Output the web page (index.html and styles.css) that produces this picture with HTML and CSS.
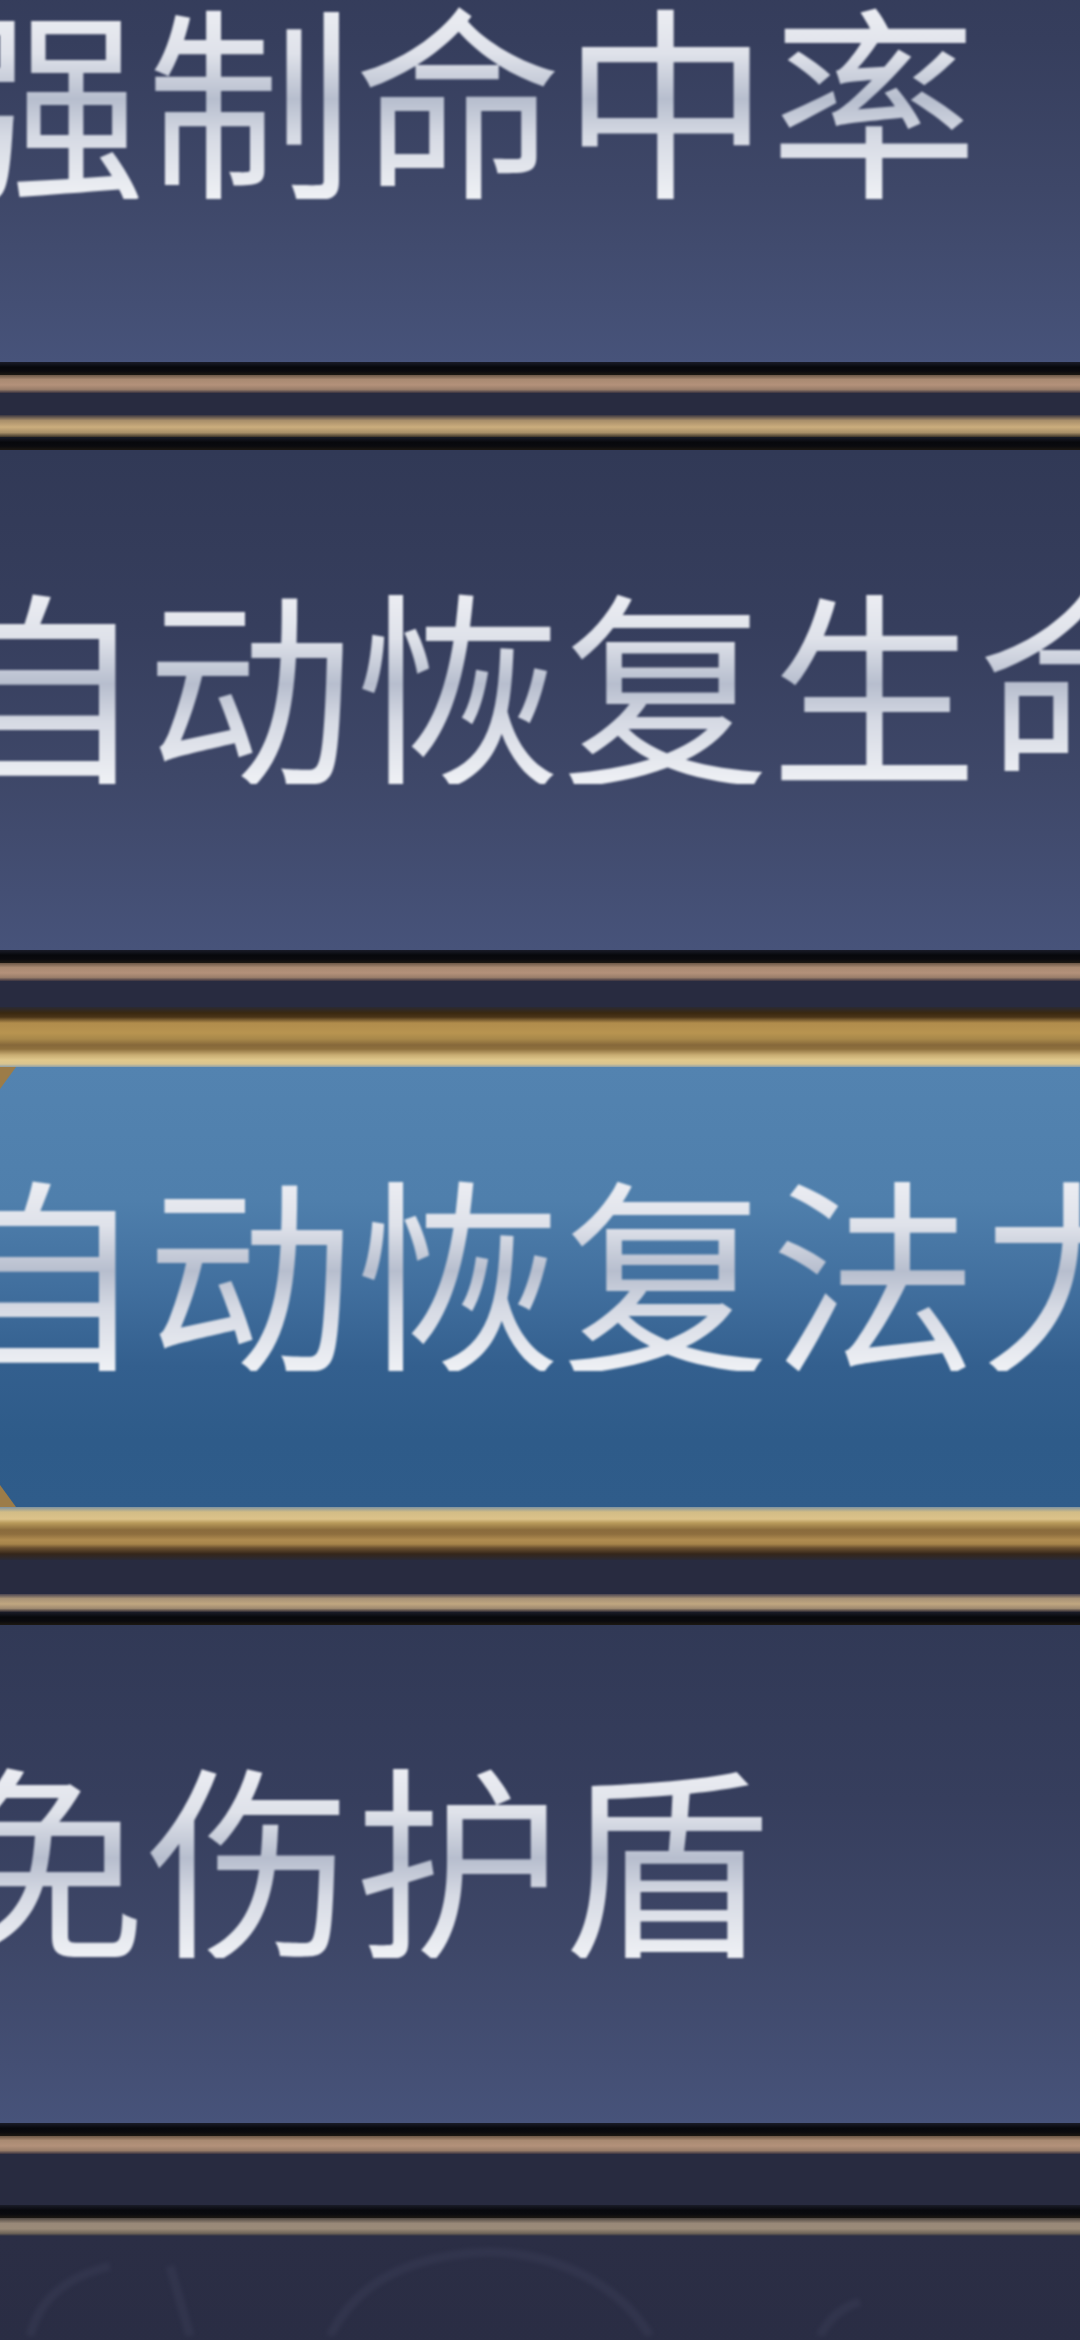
FILE: index.html
```html
<!DOCTYPE html>
<html lang="zh-CN">
<head>
<meta charset="utf-8">
<title>技能列表</title>
<link rel="stylesheet" href="styles.css">
</head>
<body>
<div class="list">
  <div class="row row-first">
    <div class="panel panel-first"><span class="label">强制命中率</span></div>
    <div class="ln-black"></div>
    <div class="ln-tan"></div>
  </div>

  <div class="gap gap-1"></div>

  <div class="row">
    <div class="ln-gold"></div>
    <div class="ln-black"></div>
    <div class="panel"><span class="label">自动恢复生命</span></div>
    <div class="ln-black"></div>
    <div class="ln-tan"></div>
  </div>

  <div class="gap gap-2"></div>

  <div class="row row-selected">
    <div class="sel-top"></div>
    <div class="sel-panel">
      <span class="corner corner-top"></span>
      <span class="label">自动恢复法力</span>
      <span class="corner corner-bottom"></span>
    </div>
    <div class="sel-bottom"></div>
  </div>

  <div class="gap gap-3"></div>

  <div class="row">
    <div class="ln-tan ln-tan-light"></div>
    <div class="ln-black"></div>
    <div class="panel panel-4"><span class="label">免伤护盾</span></div>
    <div class="ln-black"></div>
    <div class="ln-tan"></div>
  </div>

  <div class="gap gap-4"></div>

  <div class="row row-last">
    <div class="ln-black"></div>
    <div class="ln-tan ln-tan-dim"></div>
    <div class="panel-dim">
      <svg class="ornament" viewBox="0 0 1080 100" width="1080" height="100" aria-hidden="true">
        <g fill="none" stroke="#34374f" stroke-width="9">
          <path d="M330 100 C 360 40, 420 18, 490 16 C 560 18, 620 50, 650 100"/>
          <path d="M30 100 C 40 60, 70 40, 110 30"/>
          <path d="M170 30 L 190 100"/>
          <path d="M820 100 C 830 80, 845 70, 860 66"/>
        </g>
      </svg>
    </div>
  </div>
</div>
</body>
</html>
```

FILE: styles.css
```css
html, body {
  margin: 0;
  padding: 0;
  width: 1080px;
  height: 2340px;
  overflow: hidden;
  background: #282b40;
}

.list {
  display: flex;
  flex-direction: column;
  width: 1080px;
}

.row {
  display: flex;
  flex-direction: column;
  position: relative;
}

.row-first {
  margin-top: -133px;
}

.panel {
  height: 500px;
  display: flex;
  align-items: center;
  padding-bottom: 40px;
  box-sizing: border-box;
  overflow: hidden;
  background: linear-gradient(to bottom, #313956 0%, #363e5d 35%, #3e4768 65%, #47537a 100%);
}

.panel-first {
  height: 495px;
}

.panel-4 {
  height: 498px;
}

.label {
  display: block;
  margin-left: -62px;
  white-space: nowrap;
  font-family: "Noto Sans CJK SC", "Noto Sans", sans-serif;
  font-size: 208px;
  line-height: 1;
  font-weight: 400;
  color: #dfe2ea;
  background: linear-gradient(to bottom, #f1f2f6 0%, #dfe2ea 30%, #b7bece 52%, #d6dae4 70%, #eff1f5 100%);
  -webkit-background-clip: text;
  background-clip: text;
  -webkit-text-fill-color: transparent;
  filter: blur(1.2px);
}

.ln-black {
  height: 13px;
  background: linear-gradient(to bottom, #1a1c28 0%, #07080c 40%, #0a0a0e 70%, #1c1812 100%);
}

.ln-tan {
  height: 18px;
  background: linear-gradient(to bottom, #6a5646 0%, #a98a72 25%, #b3917a 55%, #9a7e6a 80%, #3a3340 100%);
}

.ln-tan-light {
  background: linear-gradient(to bottom, #4a4450 0%, #a89276 25%, #c0a680 55%, #a08a70 80%, #2a2630 100%);
}

.ln-tan-dim {
  background: linear-gradient(to bottom, #4e4640 0%, #988878 30%, #9a8a78 60%, #6e6458 85%, #2c2e42 100%);
}

.ln-gold {
  height: 22px;
  background: linear-gradient(to bottom, #3a3640 0%, #a88e6a 25%, #cbad7d 55%, #a88f68 80%, #3c3428 100%);
}

.gap {
  background: #282b40;
}
.gap-1 { height: 22px; }
.gap-2 { height: 26px; }
.gap-3 { height: 34px; }
.gap-4 { height: 51px; }

/* selected row */
.sel-top {
  height: 60px;
  background: linear-gradient(to bottom,
    #2a2a34 0px,
    #3a2810 6px,
    #4a3418 10px,
    #b08c4c 16px,
    #b89450 26px,
    #a8884a 32px,
    #86683a 38px,
    #8e703e 42px,
    #c8ac72 48px,
    #e0c88c 53px,
    #d8c490 57px,
    #8ea0a8 60px);
}

.sel-panel {
  position: relative;
  height: 440px;
  display: flex;
  align-items: center;
  padding-bottom: 40px;
  box-sizing: border-box;
  overflow: hidden;
  background: linear-gradient(to bottom, #5383b0 0%, #4f7fac 30%, #416f9e 50%, #335f8e 68%, #2e5b89 85%, #2f5c8a 100%);
}

.sel-bottom {
  height: 53px;
  background: linear-gradient(to bottom,
    #7f93a0 0px,
    #d2bc86 5px,
    #dcc28a 12px,
    #b89a5a 16px,
    #8a6b3c 23px,
    #8e6e3e 27px,
    #b08c50 33px,
    #a6844a 37px,
    #6a5030 41px,
    #35261a 47px,
    #2a2a36 53px);
}

.corner {
  position: absolute;
  left: 0;
  width: 16px;
  height: 22px;
  background: #9c7c48;
}
.corner-top {
  top: 0;
  clip-path: polygon(0 0, 100% 0, 0 100%);
}
.corner-bottom {
  bottom: 0;
  clip-path: polygon(0 0, 100% 100%, 0 100%);
}

/* last dim row */
.panel-dim {
  height: 110px;
  overflow: hidden;
  background: linear-gradient(to bottom, #2b2e45 0%, #2a2d44 100%);
}

.ornament {
  display: block;
  opacity: 0.8;
  filter: blur(2px);
}
```
